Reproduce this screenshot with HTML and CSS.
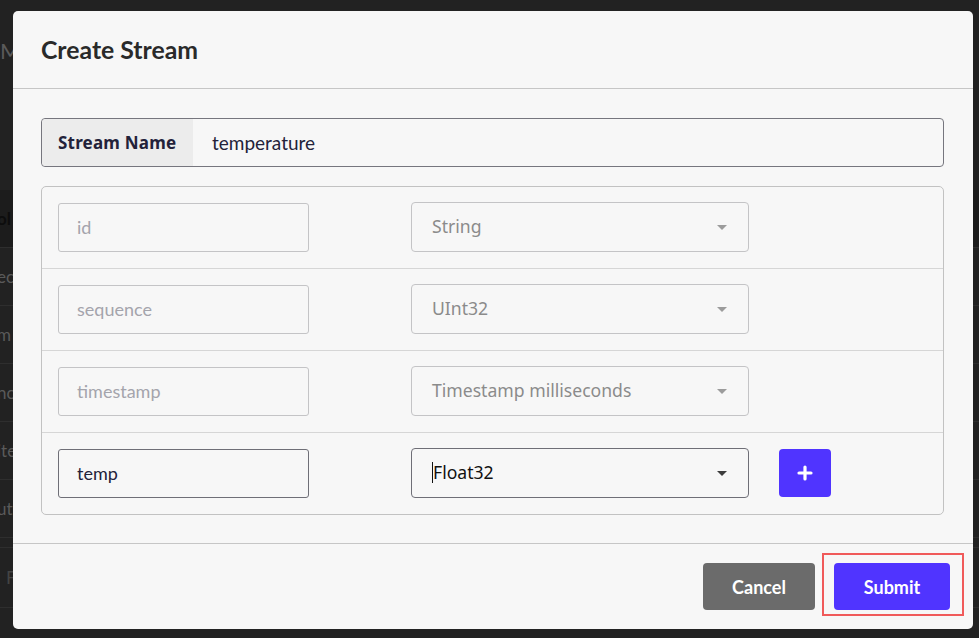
FILE: index.html
```html
<!DOCTYPE html>
<html>
<head>
<meta charset="utf-8">
<link rel="stylesheet" href="styles.css">
</head>
<body>
<div class="page">
  <div class="page-title">Ma</div>
  <div class="table">
    <div class="trow thead">ol</div>
    <div class="trow">ec</div>
    <div class="trow">m</div>
    <div class="trow">nc</div>
    <div class="trow">ite</div>
    <div class="trow">ut</div>
  </div>
  <div class="pager"><span class="pbtn">F</span></div>
</div>

<div class="modal">
  <div class="modal-header">
    <h2 class="modal-title">Create Stream</h2>
  </div>
  <div class="modal-body">
    <div class="name-group">
      <span class="name-label">Stream Name</span>
      <span class="name-value">temperature</span>
    </div>
    <div class="fields">
      <div class="field-row">
        <div class="text-input disabled"><span class="ph">id</span></div>
        <div class="select disabled"><span>String</span><i class="caret"></i></div>
      </div>
      <div class="field-row">
        <div class="text-input disabled"><span class="ph">sequence</span></div>
        <div class="select disabled"><span>UInt32</span><i class="caret"></i></div>
      </div>
      <div class="field-row">
        <div class="text-input disabled"><span class="ph">timestamp</span></div>
        <div class="select disabled"><span>Timestamp milliseconds</span><i class="caret"></i></div>
      </div>
      <div class="field-row">
        <div class="text-input active"><span class="val">temp</span></div>
        <div class="select active"><span><b class="cursor"></b>Float32</span><i class="caret"></i></div>
        <button class="add-btn" aria-label="Add">
          <svg width="16" height="16" viewBox="0 0 16 16"><path d="M8 2v12M2 8h12" stroke="#fff" stroke-width="3.2" stroke-linecap="round"/></svg>
        </button>
      </div>
    </div>
  </div>
  <div class="modal-footer">
    <button class="btn btn-cancel">Cancel</button>
    <div class="submit-wrap">
      <button class="btn btn-submit">Submit</button>
      <span class="highlight"></span>
    </div>
  </div>
</div>
</body>
</html>
```

FILE: styles.css
```css
html, body {
  margin: 0;
  padding: 0;
  height: 100%;
  background: #222222;
  overflow: hidden;
}

.page {
  font-family: "Lato", "Liberation Sans", sans-serif;
  color: #5a5a5a;
  padding-top: 38px;
}
.page-title {
  font-size: 22px;
  line-height: 26px;
  height: 152px;
}
.table {
  margin-left: -3px;
}
.trow {
  height: 57px;
  line-height: 57px;
  border-bottom: 1px solid #2e2e2e;
  font-size: 17px;
}
.thead {
  background: #1c1c1c;
  color: #0d0d0d;
  font-weight: 700;
}
.pager {
  margin-top: 9px;
  border-top: 1px solid #2e2e2e;
  border-bottom: 1px solid #2e2e2e;
  height: 59px;
  padding-left: 6px;
}
.pbtn {
  display: inline-block;
  line-height: 59px;
  font-size: 18px;
  color: #444;
}

/* modal */
.modal {
  position: absolute;
  left: 13px;
  top: 11px;
  width: 960px;
  height: 618px;
  background: #f7f7f7;
  border-radius: 5px;
  display: flex;
  flex-direction: column;
  font-family: "Lato", "Liberation Sans", sans-serif;
}
.modal-header {
  height: 77px;
  border-bottom: 1px solid #c6c6c6;
  display: flex;
  align-items: center;
  padding: 0 28px;
}
.modal-title {
  margin: 0;
  font-size: 24.8px;
  font-weight: 700;
  color: #2a2a2a;
}
.modal-body {
  padding: 29px 29px 28px 28px;
  border-bottom: 1px solid #c6c6c6;
}
.name-group {
  height: 47px;
  border: 1px solid #76767e;
  border-radius: 4px;
  display: flex;
  align-items: stretch;
  margin-bottom: 19px;
}
.name-label {
  width: 151px;
  background: #ececec;
  border-radius: 4px 0 0 4px;
  display: flex;
  align-items: center;
  padding-left: 16px;
  box-sizing: border-box;
  font-family: "Noto Sans", "Open Sans", sans-serif;
  font-weight: 700;
  font-size: 17px;
  letter-spacing: 0.2px;
  color: #23223a;
}
.name-value {
  display: flex;
  align-items: center;
  padding-left: 19px;
  font-size: 19px;
  color: #23223a;
}
.fields {
  border: 1px solid #c2c2c2;
  border-radius: 5px;
}
.field-row {
  display: flex;
  align-items: center;
  padding: 15px 16px 16px 16px;
  border-bottom: 1px solid #d6d6d6;
}
.field-row:last-child {
  border-bottom: 0;
}
.text-input {
  width: 251px;
  height: 49px;
  box-sizing: border-box;
  border: 1px solid #c4c4c6;
  border-radius: 3px;
  display: flex;
  align-items: center;
  padding-left: 18px;
  font-size: 18px;
  margin-right: 102px;
}
.text-input .ph { color: #a4a4ac; }
.text-input.active { border-color: #6f6f77; }
.text-input .val { color: #23223a; }

.select {
  width: 338px;
  height: 50px;
  box-sizing: border-box;
  border: 1px solid #c4c4c6;
  border-radius: 4px;
  display: flex;
  align-items: center;
  justify-content: space-between;
  padding: 0 21px 0 20px;
  font-family: "Noto Sans", "Open Sans", sans-serif;
  font-size: 17.6px;
  color: #8b8b8b;
}
.select span {
  position: relative;
  top: -1px;
}
.select.active {
  border-color: #6f6f77;
  color: #111;
}
.caret {
  width: 0;
  height: 0;
  border-left: 5px solid transparent;
  border-right: 5px solid transparent;
  border-top: 5px solid #9c9c9c;
}
.select.active .caret { border-top-color: #3c3c3c; }
.cursor {
  display: inline-block;
  width: 1px;
  height: 21px;
  background: #111;
  vertical-align: -4px;
}
.add-btn {
  margin-left: 30px;
  width: 52px;
  height: 48px;
  border: 0;
  border-radius: 4px;
  background: #5034ff;
  display: flex;
  align-items: center;
  justify-content: center;
  padding: 0;
}

.modal-footer {
  flex: 1;
  display: flex;
  justify-content: flex-end;
  align-items: center;
  padding: 0 23px 0 0;
  gap: 19px;
}
.btn {
  height: 47px;
  border: 0;
  border-radius: 4px;
  font-family: "Lato", "Liberation Sans", sans-serif;
  font-weight: 700;
  font-size: 18px;
  color: #ffffff;
  padding: 0;
}
.btn-cancel {
  width: 112px;
  background: #6b6b6b;
}
.submit-wrap {
  position: relative;
  display: flex;
}
.btn-submit {
  width: 116px;
  background: #5034ff;
}
.highlight {
  position: absolute;
  left: -12px;
  top: -10px;
  width: 138px;
  height: 59px;
  border: 2px solid #f05a5a;
  pointer-events: none;
}
```
